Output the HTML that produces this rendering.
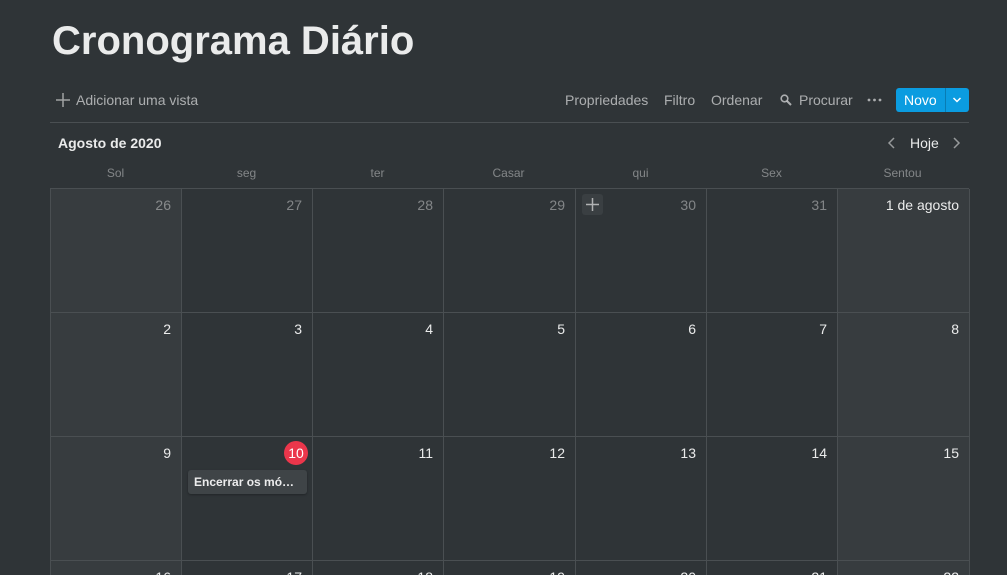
<!DOCTYPE html>
<html style="width:1007px;height:575px;overflow:hidden"><head><meta charset="utf-8"><style>
*{margin:0;padding:0;box-sizing:border-box}
body{width:1007px;height:575px;overflow:hidden;background:#2f3437;font-family:"Liberation Sans",sans-serif;color:rgba(255,255,255,.9);position:relative}
.a{position:absolute}
h1{position:absolute;left:52px;top:19px;font-size:40px;font-weight:700;color:rgba(255,255,255,.9)}
.tb{font-size:14px;color:rgba(255,255,255,.6);top:92px}
.wd{top:166px;font-size:12px;color:rgba(255,255,255,.4);width:131px;text-align:center}
.cell{position:absolute;border-right:1px solid #4a4f52;border-bottom:1px solid #4a4f52;height:124px}
.we{background:#373c3f}
.n{position:absolute;right:10px;top:8px;font-size:14px;color:rgba(255,255,255,.9)}
.g{color:rgba(255,255,255,.4)}
</style></head><body>
<h1>Cronograma Diário</h1>
<svg class="a" style="left:56px;top:93px" width="14" height="14"><path d="M7 0V14M0 7H14" stroke="rgba(255,255,255,.55)" stroke-width="1.5"/></svg>
<div class="a tb" style="left:76px">Adicionar uma vista</div>
<div class="a tb" style="left:565px">Propriedades</div>
<div class="a tb" style="left:664px">Filtro</div>
<div class="a tb" style="left:711px">Ordenar</div>
<svg class="a" style="left:780px;top:94px" width="12" height="12"><circle cx="4.5" cy="4.5" r="3.3" fill="none" stroke="rgba(255,255,255,.6)" stroke-width="1.6"/><path d="M7 7L11 11" stroke="rgba(255,255,255,.6)" stroke-width="2"/></svg>
<div class="a tb" style="left:799px">Procurar</div>
<svg class="a" style="left:867px;top:98px" width="15" height="4"><circle cx="2" cy="2" r="1.4" fill="rgba(255,255,255,.6)"/><circle cx="7.5" cy="2" r="1.4" fill="rgba(255,255,255,.6)"/><circle cx="13" cy="2" r="1.4" fill="rgba(255,255,255,.6)"/></svg>
<div class="a" style="left:896px;top:88px;width:73px;height:24px;background:#0b9ce0;border-radius:3px"></div>
<div class="a" style="left:904px;top:92px;font-size:14px;color:#fff">Novo</div>
<div class="a" style="left:945px;top:88px;width:1px;height:24px;background:rgba(0,0,0,.2)"></div>
<svg class="a" style="left:952px;top:96px" width="10" height="8"><path d="M1.5 2L5 5.5L8.5 2" fill="none" stroke="#fff" stroke-width="1.5"/></svg>
<div class="a" style="left:50px;top:122px;width:919px;height:1px;background:#4a4f52"></div>
<div class="a" style="left:58px;top:135px;font-size:14px;font-weight:700">Agosto de 2020</div>
<svg class="a" style="left:887px;top:136px" width="10" height="14"><path d="M7 2L2 7L7 12" fill="none" stroke="rgba(255,255,255,.5)" stroke-width="1.5"/></svg>
<div class="a" style="left:910px;top:135px;font-size:14px">Hoje</div>
<svg class="a" style="left:951px;top:136px" width="10" height="14"><path d="M3 2L8 7L3 12" fill="none" stroke="rgba(255,255,255,.5)" stroke-width="1.5"/></svg>
<div class="a wd" style="left:50px">Sol</div><div class="a wd" style="left:181px">seg</div><div class="a wd" style="left:312px">ter</div><div class="a wd" style="left:443px">Casar</div><div class="a wd" style="left:575px">qui</div><div class="a wd" style="left:706px">Sex</div><div class="a wd" style="left:837px">Sentou</div>
<div class="a" style="left:50px;top:188px;width:919px;height:387px;border-left:1px solid #4a4f52;border-top:1px solid #4a4f52"></div>
<div id="g"></div>
<script>
var xs=[50,181,312,443,575,706,837,969],rows=[["26","27","28","29","30","31","1 de agosto"],["2","3","4","5","6","7","8"],["9","10","11","12","13","14","15"],["16","17","18","19","20","21","22"]],h="";
for(var r=0;r<4;r++)for(var c=0;c<7;c++){var t=189+r*124,we=(c==0||c==6);var g=(r==0&&c<6)?" g":"";
var num=(r==2&&c==1)?'<div style="position:absolute;right:4px;top:4px;width:24px;height:24px;border-radius:12px;background:#eb364b;color:#fff;font-size:14px;text-align:center;line-height:24px">10</div>':'<div class="n'+g+'">'+rows[r][c]+'</div>';
h+='<div class="cell'+(we?' we':'')+'" style="left:'+(xs[c]+1)+'px;top:'+t+'px;width:'+(xs[c+1]-xs[c])+'px'+(r==3?';height:14px;border-bottom:0':'')+'">'+num+'</div>';}
document.getElementById("g").innerHTML=h;
</script>
<div class="a" style="left:582px;top:194px;width:21px;height:21px;background:#3a3f42;border-radius:3px"></div>
<svg class="a" style="left:586px;top:198px" width="13" height="13"><path d="M6.5 0V13M0 6.5H13" stroke="rgba(255,255,255,.6)" stroke-width="1.5"/></svg>
<div class="a" style="left:188px;top:470px;width:119px;height:24px;background:#3f4447;border-radius:3px;box-shadow:0 1px 2px rgba(0,0,0,.3);font-size:12px;font-weight:700;padding:5px 6px;white-space:nowrap;overflow:hidden">Encerrar os mó…</div>
</body></html>
